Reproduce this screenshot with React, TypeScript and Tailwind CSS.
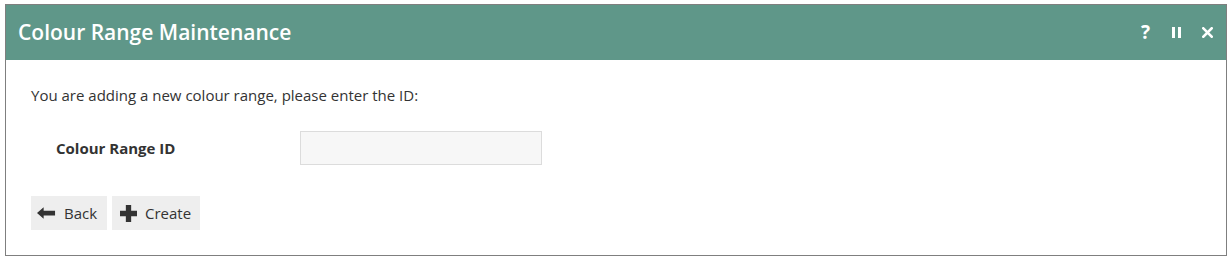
export default function App() {
  return (
    <div
      className="bg-white w-[1230px] h-[259px] pt-[4px] pl-[5px]"
      style={{ fontFamily: '"Open Sans", sans-serif' }}
    >
      <div className="w-[1222px] h-[252px] border border-[#7f7f7f] flex flex-col">
        <div className="h-[55px] bg-[#5f9789] flex items-center justify-between pl-[12px] pr-[13px]">
          <h1 className="text-white text-[21px] font-semibold leading-none">Colour Range Maintenance</h1>
          <div className="flex items-center text-white font-bold leading-none">
            <span className="text-[19px] w-[9px] mr-[22px]">?</span>
            <span className="flex gap-[3px] mr-[21px]">
              <span className="w-[3px] h-[11px] bg-white" />
              <span className="w-[3px] h-[11px] bg-white" />
            </span>
            <svg viewBox="0 0 10 10" className="w-[11px] h-[11px]" stroke="white" strokeWidth={2.4} strokeLinecap="square">
              <path d="M1.2 1.2l7.6 7.6M8.8 1.2l-7.6 7.6" />
            </svg>
          </div>
        </div>
        <div className="pl-[25px] pt-[24px] text-[15px] text-[#333]">
          <p className="leading-[22px]">You are adding a new colour range, please enter the ID:</p>
          <div className="flex items-center mt-[25px] h-[34px]">
            <label className="w-[269px] pl-[25px] font-bold">Colour Range ID</label>
            <input className="w-[242px] h-[34px] bg-[#f7f7f7] border border-[#dcdcdc] outline-none" />
          </div>
          <div className="flex gap-[5px] mt-[31px]">
            <button className="h-[34px] w-[76px] bg-[#eeeeee] flex items-center gap-[8px] pl-[6px] text-[#333]">
              <svg viewBox="0 0 20 12" className="w-[19px] h-[12px]" fill="#333">
                <path d="M0 6L7 0V3.5H19V8.5H7V12Z" />
              </svg>
              Back
            </button>
            <button className="h-[34px] w-[88px] bg-[#eeeeee] flex items-center gap-[8px] pl-[8px] text-[#333]">
              <svg viewBox="0 0 16 16" className="w-[17px] h-[17px]" fill="#333">
                <path d="M5.5 0H10.5V5.5H16V10.5H10.5V16H5.5V10.5H0V5.5H5.5Z" />
              </svg>
              Create
            </button>
          </div>
        </div>
      </div>
    </div>
  );
}
